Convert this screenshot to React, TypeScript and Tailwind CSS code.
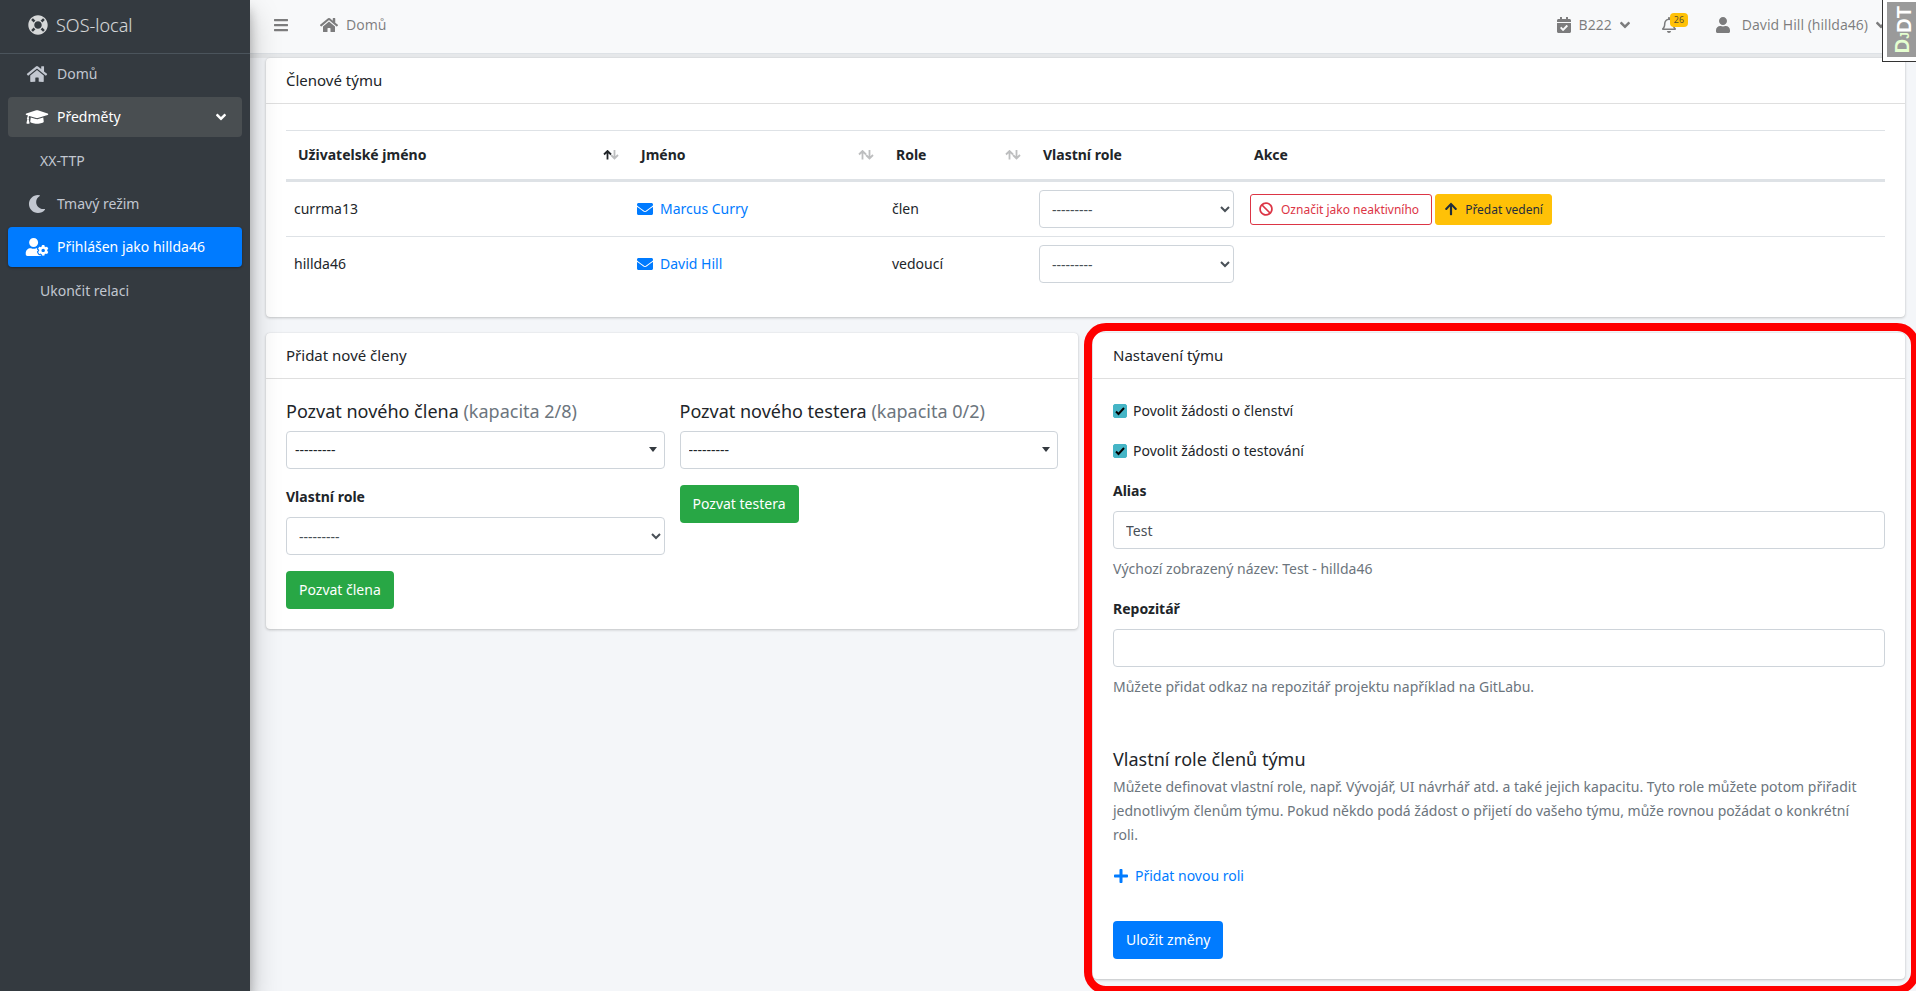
import React from 'react';
import {
  FaAngleDown,
  FaArrowUp,
  FaBan,
  FaBars,
  FaCalendarCheck,
  FaEnvelope,
  FaGraduationCap,
  FaHome,
  FaLifeRing,
  FaMoon,
  FaPlus,
  FaRegBell,
  FaUser,
  FaUserCog,
} from 'react-icons/fa';

const EMPTY = '---------';

const Card: React.FC<{ title: string; children: React.ReactNode }> = ({ title, children }) => (
  <section className="rounded bg-white shadow-[0_0_1px_rgba(0,0,0,0.125),0_1px_3px_rgba(0,0,0,0.2)]">
    <header className="border-b border-black/[0.125] px-5 py-3">
      <h3 className="text-[15px] leading-[21px]">{title}</h3>
    </header>
    {children}
  </section>
);

const NativeSelect: React.FC<{ id?: string; label?: string }> = ({ id, label }) => (
  <select
    id={id}
    aria-label={label}
    className="block h-[38px] w-full rounded border border-[#ced4da] bg-white px-2 text-[#495057]"
  >
    <option>{EMPTY}</option>
  </select>
);

const SearchSelect: React.FC<{ id: string }> = ({ id }) => (
  <div className="relative">
    <select
      id={id}
      className="block h-[38px] w-full appearance-none rounded border border-[#ced4da] bg-white px-2 text-[#212529]"
    >
      <option>{EMPTY}</option>
    </select>
    <svg className="pointer-events-none absolute top-4 right-2 h-[5px] w-2" viewBox="0 0 8 5">
      <path d="M0 0h8L4 5z" fill="#343a40" />
    </svg>
  </div>
);

const SortIcon: React.FC<{ active?: boolean }> = ({ active }) => (
  <svg className="mb-px h-[10px] w-4" viewBox="0 0 16 10" fill="none" strokeWidth="1.8">
    <path d="M4.500 9.500V1M1 4.500L4.500 1l3.500 3.500" stroke={active ? '#212529' : '#bdbebf'} />
    <path d="M11.500 0v8.500M8 5L11.500 8.500 15 5" stroke="#bdbebf" />
  </svg>
);

const members = [
  { login: 'currma13', name: 'Marcus Curry', role: 'člen', actions: true },
  { login: 'hillda46', name: 'David Hill', role: 'vedoucí', actions: false },
];

const Sidebar: React.FC = () => (
  <aside className="relative z-20 w-[250px] shrink-0 bg-[#343a40] text-[#c2c7d0] shadow-[0_14px_28px_rgba(0,0,0,0.25),0_10px_10px_rgba(0,0,0,0.22)]">
    <a href="#" className="flex h-[54px] items-center gap-2 border-b border-[#4b545c] pb-1 pl-7 text-white/80">
      <FaLifeRing className="size-5" />
      <span className="text-[18px] font-light">SOS-local</span>
    </a>
    <nav className="px-2">
      <ul className="flex flex-col gap-[3px]">
        <li>
          <a href="#" className="flex h-10 items-center gap-[7px] rounded px-4">
            <FaHome className="h-[18px] w-[26px]" />
            Domů
          </a>
        </li>
        <li>
          <a href="#" className="flex h-10 items-center gap-[7px] rounded bg-[#494e51] px-4 text-white">
            <FaGraduationCap className="h-[18px] w-[26px]" />
            Předměty
            <FaAngleDown className="ml-auto h-4 w-[10px]" />
          </a>
          <ul className="mt-1">
            <li>
              <a href="#" className="flex h-10 items-center rounded px-8">
                XX-TTP
              </a>
            </li>
          </ul>
        </li>
        <li>
          <a href="#" className="flex h-10 items-center gap-[7px] rounded px-4">
            <FaMoon className="h-[18px] w-[26px]" />
            Tmavý režim
          </a>
        </li>
        <li>
          <a
            href="#"
            className="flex h-10 items-center gap-[7px] rounded bg-[#007bff] px-4 text-white shadow-[0_1px_3px_rgba(0,0,0,0.12),0_1px_2px_rgba(0,0,0,0.24)]"
          >
            <FaUserCog className="h-[18px] w-[26px]" />
            Přihlášen jako hillda46
          </a>
          <ul className="mt-1">
            <li>
              <a href="#" className="flex h-10 items-center rounded px-8">
                Ukončit relaci
              </a>
            </li>
          </ul>
        </li>
      </ul>
    </nav>
  </aside>
);

const Topbar: React.FC = () => (
  <header className="flex h-[54px] items-center justify-between border-b border-[#dee2e6] bg-[#f8f9fa] pr-[30px] pb-[3px] pl-6 text-black/50 shadow-[0_4px_0_#e6e8ea]">
    <div className="flex items-center gap-8">
      <button type="button" aria-label="Menu">
        <FaBars className="h-4 w-[14px]" />
      </button>
      <a href="#" className="flex items-center gap-2">
        <FaHome className="size-[18px]" />
        Domů
      </a>
    </div>
    <div className="flex items-center gap-8">
      <a href="#" className="flex items-center gap-2">
        <FaCalendarCheck className="h-4 w-[14px]" />
        B222
        <FaAngleDown className="h-4 w-[10px]" />
      </a>
      <a href="#" className="relative w-[22px]" aria-label="26">
        <FaRegBell className="h-4 w-[14px]" />
        <span className="absolute -top-1 left-2 rounded bg-[#ffc107] px-1 text-[9px] leading-[14px] text-[#1f2d3d]/80">
          26
        </span>
      </a>
      <a href="#" className="flex items-center gap-2">
        <FaUser className="mr-1 h-4 w-[14px]" />
        David Hill (hillda46)
        <FaAngleDown className="h-4 w-[10px]" />
      </a>
    </div>
  </header>
);

const MembersTable: React.FC = () => (
  <table className="w-full table-fixed border-t border-[#dee2e6] text-left">
    <colgroup>
      <col className="w-[343px]" />
      <col className="w-[255px]" />
      <col className="w-[147px]" />
      <col className="w-[211px]" />
      <col />
    </colgroup>
    <thead>
      <tr className="h-[50px] border-b-3 border-[#dee2e6]">
        <th className="pr-[10px] pl-3">
          <div className="flex items-center justify-between">
            Uživatelské jméno <SortIcon active />
          </div>
        </th>
        <th className="pr-[10px] pl-3">
          <div className="flex items-center justify-between">
            Jméno <SortIcon />
          </div>
        </th>
        <th className="pr-[10px] pl-3">
          <div className="flex items-center justify-between">
            Role <SortIcon />
          </div>
        </th>
        <th className="px-3">Vlastní role</th>
        <th className="px-3">Akce</th>
      </tr>
    </thead>
    <tbody>
      {members.map((m) => (
        <tr key={m.login} className="border-b border-[#dee2e6] last:border-b-0">
          <td className="p-2">{m.login}</td>
          <td className="p-2">
            <a href="#" className="flex items-center gap-[7px] text-[#007bff]">
              <FaEnvelope className="size-4" />
              {m.name}
            </a>
          </td>
          <td className="p-2">{m.role}</td>
          <td className="p-2">
            <NativeSelect label={`Vlastní role ${m.login}`} />
          </td>
          <td className="p-2">
            {m.actions && (
              <div className="flex gap-[3px] text-[12px] leading-[21px]">
                <button
                  type="button"
                  className="flex items-center gap-2 rounded-[3px] border border-[#dc3545] py-1 pr-3 pl-2 text-[#dc3545]"
                >
                  <FaBan className="size-[14px]" />
                  Označit jako neaktivního
                </button>
                <button
                  type="button"
                  className="flex items-center gap-[7px] rounded-[3px] border border-[#ffc107] bg-[#ffc107] px-2 py-1 text-[#1f2d3d]"
                >
                  <FaArrowUp className="size-[14px]" />
                  Předat vedení
                </button>
              </div>
            )}
          </td>
        </tr>
      ))}
    </tbody>
  </table>
);

const InviteCard: React.FC = () => (
  <Card title="Přidat nové členy">
    <div className="grid grid-cols-2 gap-[15px] p-5">
      <form>
        <label htmlFor="member" className="mb-2 block text-[18px] leading-6">
          Pozvat nového člena <span className="text-[#6c757d]">(kapacita 2/8)</span>
        </label>
        <SearchSelect id="member" />
        <label htmlFor="member-role" className="mt-4 mb-2 block font-bold">
          Vlastní role
        </label>
        <NativeSelect id="member-role" />
        <button type="button" className="mt-4 h-[38px] rounded bg-[#28a745] px-[13px] text-white">
          Pozvat člena
        </button>
      </form>
      <form>
        <label htmlFor="tester" className="mb-2 block text-[18px] leading-6">
          Pozvat nového testera <span className="text-[#6c757d]">(kapacita 0/2)</span>
        </label>
        <SearchSelect id="tester" />
        <button type="button" className="mt-4 h-[38px] rounded bg-[#28a745] px-[13px] text-white">
          Pozvat testera
        </button>
      </form>
    </div>
  </Card>
);

const Checkbox: React.FC<{ label: string }> = ({ label }) => (
  <label className="mb-4 flex items-center gap-[6px]">
    <span className="relative size-[14px]">
      <input
        type="checkbox"
        defaultChecked
        className="peer block size-[14px] appearance-none rounded-[2px] border border-[#adb5bd] checked:border-[#45b5c6] checked:bg-[#45b5c6]"
      />
      <svg
        className="pointer-events-none absolute inset-0 hidden size-[14px] peer-checked:block"
        viewBox="0 0 14 14"
        fill="none"
        stroke="#000"
        strokeWidth="2"
      >
        <path d="M3 7.500L5.500 10 11 4" />
      </svg>
    </span>
    {label}
  </label>
);

const SettingsCard: React.FC = () => (
  <div className="relative">
    <div className="pointer-events-none absolute -top-[10px] -right-[14px] -bottom-[15px] -left-[9px] rounded-[22px] border-8 border-[#ff0000]" />
    <Card title="Nastavení týmu">
      <form className="p-5">
        <Checkbox label="Povolit žádosti o členství" />
        <Checkbox label="Povolit žádosti o testování" />
        <label htmlFor="alias" className="mb-2 block font-bold">
          Alias
        </label>
        <input
          id="alias"
          type="text"
          defaultValue="Test"
          className="block h-[38px] w-full rounded border border-[#ced4da] px-3 text-[#495057]"
        />
        <p className="mt-2 mb-4 text-[#6c757d]">Výchozí zobrazený název: Test - hillda46</p>
        <label htmlFor="repo" className="mb-2 block font-bold">
          Repozitář
        </label>
        <input
          id="repo"
          type="text"
          className="block h-[38px] w-full rounded border border-[#ced4da] px-3 text-[#495057]"
        />
        <p className="mt-2 text-[#6c757d]">Můžete přidat odkaz na repozitář projektu například na GitLabu.</p>
        <h5 className="mt-12 mb-1 text-[18px] leading-6">Vlastní role členů týmu</h5>
        <p className="pr-3 text-[#6c757d]">
          Můžete definovat vlastní role, např. Vývojář, UI návrhář atd. a také jejich kapacitu. Tyto role můžete
          potom přiřadit jednotlivým členům týmu. Pokud někdo podá žádost o přijetí do vašeho týmu, může rovnou
          požádat o konkrétní roli.
        </p>
        <a href="#" className="mt-[17px] flex items-center gap-[6px] text-[#007bff]">
          <FaPlus className="size-4" />
          Přidat novou roli
        </a>
        <button type="button" className="mt-[33px] block h-[38px] rounded bg-[#007bff] px-[13px] text-white">
          Uložit změny
        </button>
      </form>
    </Card>
  </div>
);

const DebugHandle: React.FC = () => (
  <button
    type="button"
    className="absolute top-0 right-0 z-30 flex h-[62px] w-[34px] border-b border-l border-[#333] bg-white pt-[2px] pb-1 pl-1"
  >
    <span className="flex w-full items-center justify-center bg-[#9a9a9a] pl-1 font-['Liberation_Sans',sans-serif] text-[20px] leading-5 font-bold text-white [writing-mode:sideways-lr]">
      <span className="text-[#e5ffd0]">
        D<small className="text-[12px]">J</small>
      </span>
      DT
    </span>
  </button>
);

const App: React.FC = () => {
  return (
    <div className="relative flex min-h-screen overflow-hidden bg-[#f4f6f9] font-['Noto_Sans',sans-serif] text-[14px] leading-6 text-[#212529]">
      <Sidebar />
      <div className="min-w-0 flex-1">
        <Topbar />
        <main className="flex flex-col gap-4 px-4 pt-1 pr-[11px]">
          <Card title="Členové týmu">
            <div className="px-5 py-[26px]">
              <MembersTable />
            </div>
          </Card>
          <div className="grid grid-cols-2 items-start gap-[15px]">
            <InviteCard />
            <SettingsCard />
          </div>
        </main>
      </div>
      <DebugHandle />
    </div>
  );
};

export default App;
